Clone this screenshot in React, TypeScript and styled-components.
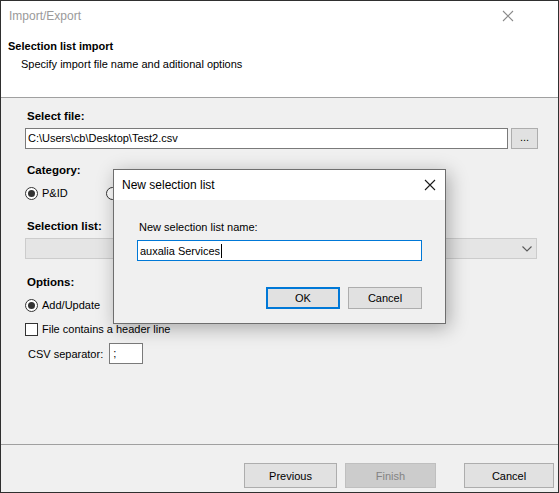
import { FC } from "react";
import styled, { createGlobalStyle } from "styled-components";

const GlobalStyle = createGlobalStyle`
  html, body {
    margin: 0;
    padding: 0;
    background: #ffffff;
  }
  * {
    box-sizing: border-box;
  }
`;

const FONT = `"Liberation Sans", Arial, sans-serif`;

const App: FC = () => {
  return (
    <>
      <GlobalStyle />
      <Window>
        <TitleBar>
          <WindowTitle>Import/Export</WindowTitle>
          <CloseIcon color="#8a8a8a" />
        </TitleBar>

        <Header>
          <HeaderTitle>Selection list import</HeaderTitle>
          <HeaderText>Specify import file name and aditional options</HeaderText>
        </Header>

        <Body>
          <GroupLabel $top={0}>Select file:</GroupLabel>
          <FileRow>
            <TextBox>C:\Users\cb\Desktop\Test2.csv</TextBox>
            <SmallButton>...</SmallButton>
          </FileRow>

          <GroupLabel $top={13}>Category:</GroupLabel>
          <RadioRow $top={7}>
            <Option>
              <Radio $checked />
              <span>P&amp;ID</span>
            </Option>
            {/* second category option sits under the dialog */}
            <Option>
              <Radio />
            </Option>
          </RadioRow>

          <GroupLabel $top={17}>Selection list:</GroupLabel>
          <ComboBox>
            <Chevron />
          </ComboBox>

          <GroupLabel $top={15}>Options:</GroupLabel>
          <RadioRow $top={7}>
            <Option>
              <Radio $checked />
              <span>Add/Update</span>
            </Option>
          </RadioRow>
          <RadioRow $top={8}>
            <Option>
              <CheckBox />
              <span>File contains a header line</span>
            </Option>
          </RadioRow>
          <CsvRow>
            <span>CSV separator:</span>
            <SmallInput>;</SmallInput>
          </CsvRow>
        </Body>

        <Footer>
          <WizardButton $width={93}>Previous</WizardButton>
          <WizardButton $width={91} $disabled>
            Finish
          </WizardButton>
          <WizardButton $width={90} $gap={28}>
            Cancel
          </WizardButton>
        </Footer>

        <Dialog>
          <DialogTitleBar>
            <DialogTitle>New selection list</DialogTitle>
            <CloseIcon color="#1a1a1a" />
          </DialogTitleBar>
          <DialogBody>
            <DialogLabel>New selection list name:</DialogLabel>
            <DialogInput>
              auxalia Services<Caret />
            </DialogInput>
            <DialogButtons>
              <DialogButton $primary>OK</DialogButton>
              <DialogButton>Cancel</DialogButton>
            </DialogButtons>
          </DialogBody>
        </Dialog>
      </Window>
    </>
  );
};

const CloseIcon: FC<{ color: string }> = ({ color }) => (
  <svg width="12" height="12" viewBox="0 0 12 12">
    <path d="M1 1 L11 11 M11 1 L1 11" stroke={color} strokeWidth="1.1" fill="none" />
  </svg>
);

const Chevron: FC = () => (
  <svg width="10" height="6" viewBox="0 0 10 6">
    <path d="M0.5 0.5 L5 5 L9.5 0.5" stroke="#5a5a5a" strokeWidth="1.1" fill="none" />
  </svg>
);

const Window = styled.div`
  position: relative;
  width: 559px;
  height: 493px;
  border: 1px solid #2f2f2f;
  display: flex;
  flex-direction: column;
  font-family: ${FONT};
  font-size: 11px;
  color: #000;
  overflow: hidden;
`;

const TitleBar = styled.div`
  height: 30px;
  display: flex;
  align-items: center;
  justify-content: space-between;
  padding: 0 44px 0 8px;
  background: #ffffff;
`;

const WindowTitle = styled.div`
  font-size: 12px;
  color: #9a9a9a;
`;

const Header = styled.div`
  height: 67px;
  background: #ffffff;
  border-bottom: 1px solid #a0a0a0;
  padding: 7px 0 0 7px;
`;

const HeaderTitle = styled.div`
  font-weight: 700;
  font-size: 11px;
  line-height: 16px;
`;

const HeaderText = styled.div`
  line-height: 16px;
  margin-top: 2px;
  padding-left: 13px;
`;

const Body = styled.div`
  flex: 1;
  background: #f0f0f0;
  padding: 10px 20px 0 24px;
  display: flex;
  flex-direction: column;
`;

const GroupLabel = styled.div<{ $top: number }>`
  font-weight: 700;
  font-size: 11.5px;
  line-height: 16px;
  padding-left: 2px;
  margin-top: ${(p) => p.$top}px;
`;

const FileRow = styled.div`
  display: flex;
  gap: 3px;
  margin-top: 4px;
`;

const TextBox = styled.div`
  flex: 1;
  height: 21px;
  background: #ffffff;
  border: 1px solid #7a7a7a;
  padding: 0 2px;
  line-height: 19px;
`;

const SmallButton = styled.div`
  width: 27px;
  height: 21px;
  background: #e1e1e1;
  border: 1px solid #adadad;
  text-align: center;
  line-height: 17px;
`;

const RadioRow = styled.div<{ $top: number }>`
  display: flex;
  gap: 38px;
  height: 16px;
  margin-top: ${(p) => p.$top}px;
`;

const Option = styled.label`
  display: flex;
  align-items: center;
  gap: 4px;
  line-height: 16px;
`;

const Radio = styled.span<{ $checked?: boolean }>`
  position: relative;
  width: 13px;
  height: 13px;
  border-radius: 50%;
  border: 1px solid #333333;
  background: #ffffff;
  flex-shrink: 0;

  &::after {
    content: "";
    display: ${(p) => (p.$checked ? "block" : "none")};
    position: absolute;
    left: 2px;
    top: 2px;
    width: 7px;
    height: 7px;
    border-radius: 50%;
    background: #333333;
  }
`;

const CheckBox = styled.span`
  width: 13px;
  height: 13px;
  border: 1px solid #333333;
  background: #ffffff;
  flex-shrink: 0;
`;

const ComboBox = styled.div`
  height: 21px;
  margin: 4px 1px 0 0;
  background: #e5e5e5;
  border: 1px solid #cccccc;
  display: flex;
  align-items: center;
  justify-content: flex-end;
  padding-right: 4px;
`;

const CsvRow = styled.div`
  display: flex;
  align-items: center;
  gap: 6px;
  margin-top: 6px;
  padding-left: 3px;
`;

const SmallInput = styled.div`
  width: 34px;
  height: 21px;
  background: #ffffff;
  border: 1px solid #7a7a7a;
  padding-left: 3px;
  line-height: 19px;
`;

const Footer = styled.div`
  height: 48px;
  background: #f0f0f0;
  border-top: 1px solid #a0a0a0;
  display: flex;
  justify-content: flex-end;
  align-items: flex-start;
  padding: 18px 4px 0 0;
`;

const WizardButton = styled.div<{ $width: number; $disabled?: boolean; $gap?: number }>`
  width: ${(p) => p.$width}px;
  height: 25px;
  margin-left: ${(p) => p.$gap ?? 8}px;
  display: flex;
  align-items: center;
  justify-content: center;
  background: ${(p) => (p.$disabled ? "#cccccc" : "#e1e1e1")};
  border: 1px solid ${(p) => (p.$disabled ? "#bfbfbf" : "#adadad")};
  color: ${(p) => (p.$disabled ? "#838383" : "#000000")};
`;

const Dialog = styled.div`
  position: absolute;
  left: 112px;
  top: 168px;
  width: 333px;
  height: 155px;
  border: 1px solid #6e6e6e;
  background: #f0f0f0;
  box-shadow: 3px 4px 18px rgba(0, 0, 0, 0.3);
  display: flex;
  flex-direction: column;
`;

const DialogTitleBar = styled.div`
  height: 30px;
  background: #ffffff;
  display: flex;
  align-items: center;
  justify-content: space-between;
  padding: 0 9px 0 8px;
`;

const DialogTitle = styled.div`
  font-size: 12px;
  color: #000000;
`;

const DialogBody = styled.div`
  flex: 1;
  padding: 19px 23px 0 23px;
  display: flex;
  flex-direction: column;
`;

const DialogLabel = styled.div`
  line-height: 16px;
  padding-left: 2px;
`;

const DialogInput = styled.div`
  margin-top: 5px;
  height: 21px;
  background: #ffffff;
  border: 1px solid #0078d7;
  display: flex;
  align-items: center;
  padding-left: 2px;
`;

const Caret = styled.span`
  width: 1px;
  height: 14px;
  background: #000000;
  margin-left: 1px;
`;

const DialogButtons = styled.div`
  display: flex;
  justify-content: flex-end;
  gap: 8px;
  margin-top: 26px;
`;

const DialogButton = styled.div<{ $primary?: boolean }>`
  width: 74px;
  height: 22px;
  display: flex;
  align-items: center;
  justify-content: center;
  background: #e1e1e1;
  border: ${(p) => (p.$primary ? "2px solid #0078d7" : "1px solid #adadad")};
`;

export default App;
